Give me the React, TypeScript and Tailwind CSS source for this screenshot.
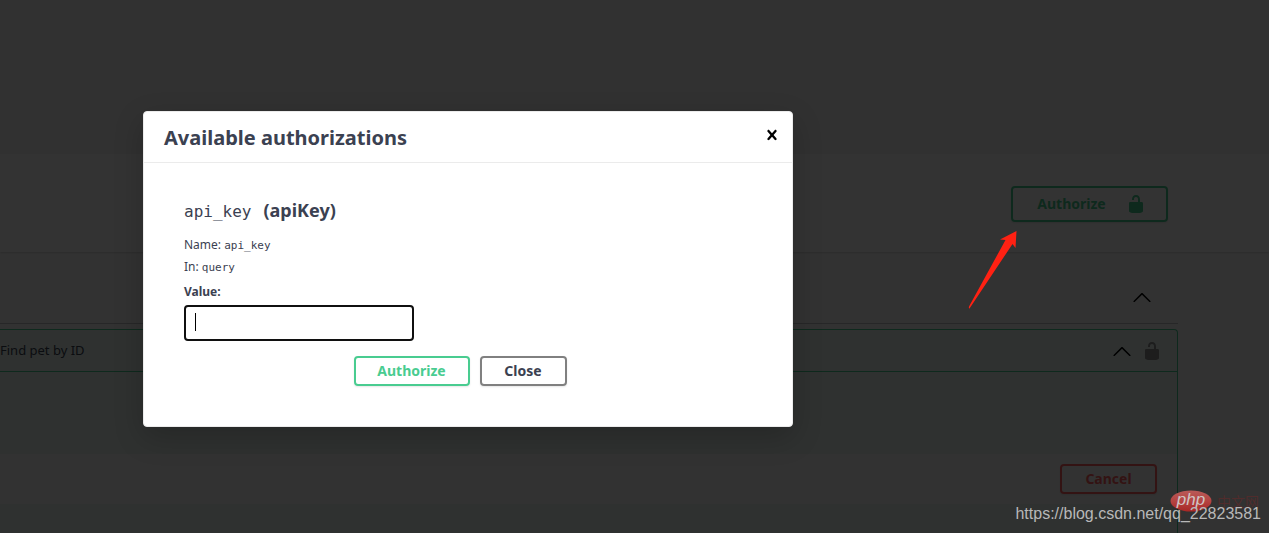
import { useState } from 'react'

const sans = "font-['Noto_Sans','Open_Sans',sans-serif]"
const mono = "font-['DejaVu_Sans_Mono','Liberation_Mono',monospace]"

const btnClass =
  'flex items-center justify-center rounded border-2 text-sm font-bold leading-5 shadow-[0_1px_2px_rgba(0,0,0,0.1)] cursor-pointer'

function UnlockIcon({ className }: { className?: string }) {
  return (
    <svg viewBox="0 0 20 20" className={className} fill="currentColor" aria-hidden="true">
      <path d="M15.8 8H14V5.6C14 2.703 12.665 1 10 1 7.334 1 6 2.703 6 5.6V6h2v-.801C8 3.754 8.797 3 10 3c1.203 0 2 .754 2 2.199V8H4c-.553 0-1 .646-1 1.199V17c0 .549.428 1.139.951 1.307l1.197.387C5.672 18.861 6.55 19 7.1 19h5.8c.549 0 1.428-.139 1.951-.307l1.196-.387c.524-.167.953-.757.953-1.306V9.199C17 8.646 16.352 8 15.8 8z" />
    </svg>
  )
}

function ArrowUpIcon() {
  return (
    <svg viewBox="0 0 20 20" className="size-5" fill="currentColor" aria-hidden="true">
      <path d="M17.418 14.908c.272.268.709.268.979 0s.271-.701 0-.969l-7.908-7.83c-.27-.268-.707-.268-.979 0l-7.908 7.83c-.27.268-.27.701 0 .969.271.268.709.268.979 0L10 7.767z" />
    </svg>
  )
}

function CloseIcon() {
  return (
    <svg viewBox="0 0 20 20" className="size-5" aria-hidden="true">
      <path d="M14.348 14.849c-.469.469-1.229.469-1.697 0L10 11.819l-2.651 3.029c-.469.469-1.229.469-1.697 0-.469-.469-.469-1.229 0-1.697l2.758-3.15-2.759-3.152c-.469-.469-.469-1.228 0-1.697.469-.469 1.228-.469 1.697 0L10 8.183l2.651-3.031c.469-.469 1.228-.469 1.697 0 .469.469.469 1.229 0 1.697l-2.758 3.152 2.758 3.15c.469.469.469 1.229 0 1.698z" />
    </svg>
  )
}

function ApiPage() {
  return (
    <div className="flex min-h-screen flex-col bg-[#fafafa] text-[#3b4151]">
      <header className="h-[154px] bg-[#f5f5f5]" />
      <section className="flex justify-end bg-white pt-8 pr-[101px] pb-[30px] shadow-[0_1px_2px_rgba(0,0,0,0.15)]">
        <button className={`${btnClass} h-9 w-[157px] gap-5 border-[#49cc90] pl-1 text-[#49cc90]`}>
          Authorize
          <UnlockIcon className="size-5" />
        </button>
      </section>
      <main className="flex grow flex-col pr-[91px]">
        <div className="flex h-[72px] items-center justify-end border-b border-[#3b4151]/30 pt-[18px] pr-[26px]">
          <button aria-label="Collapse section" className="text-black">
            <ArrowUpIcon />
          </button>
        </div>
        <article className="mt-[5px] flex grow flex-col rounded-tr border-t border-r border-[#49cc90] bg-[#e8f6f0]">
          <div className="flex h-[42px] items-center border-b border-[#49cc90]">
            <span className="grow text-[13px]">Find pet by ID</span>
            <button aria-label="Collapse operation" className="mr-[10px] text-black">
              <ArrowUpIcon />
            </button>
            <button aria-label="Authorization" className="mr-[15px] text-[#8f9092]">
              <UnlockIcon className="size-5" />
            </button>
          </div>
          <div className="h-[82px]" />
          <div className="flex h-[50px] items-center justify-end bg-[#fbfbfb] pr-5">
            <button className={`${btnClass} h-[30px] w-[97px] border-[#ff6060] text-[#ff6060]`}>
              Cancel
            </button>
          </div>
        </article>
      </main>
    </div>
  )
}

function AuthDialog() {
  const [value, setValue] = useState('')

  return (
    <div
      role="dialog"
      aria-labelledby="auth-title"
      className="w-[650px] max-w-full rounded border border-[#ebebeb] bg-white text-[#3b4151] shadow-[0_10px_30px_rgba(0,0,0,0.2)]"
    >
      <div className="flex h-[51px] items-center justify-between border-b border-[#ebebeb] pr-[10px] pl-5">
        <h3 id="auth-title" className="pt-px text-xl font-bold">
          Available authorizations
        </h3>
        <button aria-label="Close dialog" className="mb-1">
          <CloseIcon />
        </button>
      </div>
      <form className="px-10 pt-[31px] pb-10" onSubmit={(e) => e.preventDefault()}>
        <h4 className="text-lg font-bold leading-8">
          <code className={`${mono} mr-3 text-base font-normal`}>api_key</code>
          (apiKey)
        </h4>
        <div className="mt-2 text-xs leading-[21px]">
          <p>
            Name: <code className={`${mono} text-[11px]`}>api_key</code>
          </p>
          <p>
            In: <code className={`${mono} text-[11px]`}>query</code>
          </p>
        </div>
        <label htmlFor="api-key" className="mt-1 block text-xs font-bold leading-5">
          Value:
        </label>
        <div className="relative mt-[3px] w-[230px]">
          <input
            id="api-key"
            type="text"
            value={value}
            onChange={(e) => setValue(e.target.value)}
            className="block h-9 w-full rounded border-2 border-[#101010] bg-white px-[10px] text-sm outline-none"
          />
          {!value && <span className="absolute top-2 left-[11px] h-[18px] w-px bg-black" />}
        </div>
        <div className="mt-[15px] flex justify-center gap-[10px] pr-4">
          <button type="submit" className={`${btnClass} h-[30px] w-[116px] border-[#49cc90] text-[#49cc90]`}>
            Authorize
          </button>
          <button type="button" className={`${btnClass} h-[30px] w-[87px] border-[#808080]`}>
            Close
          </button>
        </div>
      </form>
    </div>
  )
}

function Watermark() {
  return (
    <div className="absolute right-2 bottom-[9px] flex flex-col items-end">
      <div className="-mb-2 flex items-center gap-[5px]">
        <svg viewBox="0 0 42 22" className="h-[22px] w-[42px]">
          <defs>
            <linearGradient id="php" x1="0" y1="0" x2="0" y2="1">
              <stop offset="0" stopColor="#b95a58" />
              <stop offset="0.5" stopColor="#b54442" />
              <stop offset="1" stopColor="#a82725" />
            </linearGradient>
          </defs>
          <ellipse cx="21" cy="11" rx="20.5" ry="10.5" fill="url(#php)" />
          <text x="21" y="15" textAnchor="middle" fontFamily="Liberation Sans, sans-serif" fontSize="17" fontStyle="italic" fill="#d0c4c4">
            php
          </text>
        </svg>
        <span className="pr-[2px] font-['Noto_Sans_CJK_SC',sans-serif] text-sm leading-5 text-[#502c2c]">中文网</span>
      </div>
      <span className="relative font-['Liberation_Sans',sans-serif] text-base leading-5 text-[#b8b8b8]">
        https://blog.csdn.net/qq_22823581
      </span>
    </div>
  )
}

export default function App() {
  return (
    <div className={`relative min-h-screen overflow-hidden ${sans}`}>
      <ApiPage />
      <div className="absolute inset-0 bg-black/80 pt-[111px] pl-[143px]">
        <AuthDialog />
      </div>
      <svg viewBox="0 0 50 80" className="absolute top-[230px] right-[251px] h-20 w-[50px]" aria-hidden="true">
        <path d="M48.5 1 47.5 18 44.5 14 1.5 78.5Q0.500 79 1 76.500L37.500 10 32 9.500Z" fill="#ff2113" />
      </svg>
      <Watermark />
    </div>
  )
}
